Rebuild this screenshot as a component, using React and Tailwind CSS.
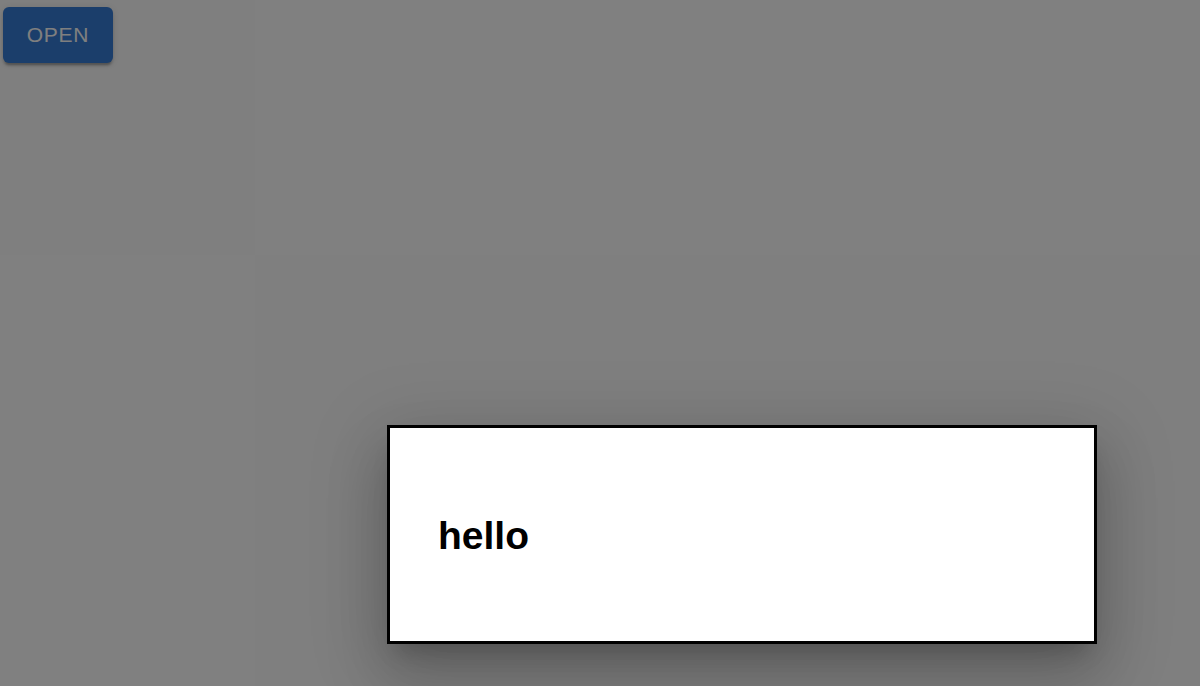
export default function App() {
  return (
    <div className="relative h-[686px] w-[1200px] overflow-hidden bg-white font-['Liberation_Sans',Arial,sans-serif]">
      <div className="pl-[3px] pt-[7px]">
        <button className="flex h-[56px] w-[110px] items-center justify-center rounded-[6px] bg-[#367cd6] text-[21px] font-medium uppercase tracking-[0.035em] text-white shadow-[0px_4px_2px_-2px_rgba(0,0,0,0.2),0px_3px_3px_0px_rgba(0,0,0,0.14),0px_1px_8px_0px_rgba(0,0,0,0.12)]">
          Open
        </button>
      </div>

      {/* backdrop */}
      <div className="absolute inset-0 bg-black/50" />

      {/* modal */}
      <div className="absolute left-[387px] top-[425px] flex h-[219px] w-[710px] items-center border-[3px] border-black bg-white pl-[48px] shadow-[0px_16px_22px_-10px_rgba(0,0,0,0.2),0px_36px_57px_5px_rgba(0,0,0,0.14),0px_14px_69px_12px_rgba(0,0,0,0.12)]">
        <h2 className="pt-[2px] text-[39px] font-bold leading-none text-black">hello</h2>
      </div>
    </div>
  );
}
